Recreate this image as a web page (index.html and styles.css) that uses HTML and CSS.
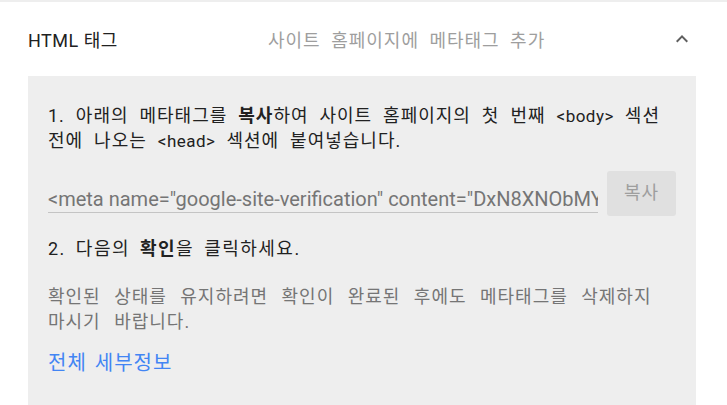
FILE: index.html
```html
<!DOCTYPE html>
<html lang="ko">
<head>
<meta charset="utf-8">
<link rel="stylesheet" href="styles.css">
</head>
<body>
<div class="card">
  <div class="header">
    <div class="title">HTML 태그</div>
    <div class="subtitle">사이트 홈페이지에 메타태그 추가</div>
    <svg class="chev" width="24" height="24" viewBox="0 0 24 24"><path d="M7.41 15.41L12 10.83l4.59 4.58L18 14l-6-6-6 6z" fill="#5f5f5f"/></svg>
  </div>
  <div class="panel">
    <p class="step step1">1. 아래의 메타태그를 <b>복사</b>하여 사이트 홈페이지의 첫 번째 <span class="code">&lt;body&gt;</span> 섹션 전에 나오는 <span class="code">&lt;head&gt;</span> 섹션에 붙여넣습니다.</p>
    <div class="copyrow">
      <div class="field"><span>&lt;meta name="google-site-verification" content="DxN8XNObMYq3kLw9Zp2sTfR7vH" /&gt;</span></div>
      <button class="copy">복사</button>
    </div>
    <p class="step step2">2. 다음의 <b>확인</b>을 클릭하세요.</p>
    <p class="note">확인된 상태를 유지하려면 확인이 완료된 후에도 메타태그를 삭제하지 마시기 바랍니다.</p>
    <a class="link" href="#">전체 세부정보</a>
  </div>
</div>
</body>
</html>
```
FILE: styles.css
```css
html, body {
  margin: 0;
  padding: 0;
  background: #fff;
}
body {
  font-family: Roboto, "Noto Sans CJK KR", sans-serif;
  color: #212121;
  width: 727px;
  height: 405px;
  overflow: hidden;
  border-top: 2px solid #eeeeee;
  box-sizing: border-box;
}
.card {
  padding: 0 31px 0 28px;
}
.header {
  display: flex;
  align-items: center;
  height: 74px;
}
.title {
  font-size: 18px;
  letter-spacing: 0.5px;
  color: #212121;
  width: 240px;
}
.subtitle {
  font-size: 18px;
  letter-spacing: 1px;
  word-spacing: 5px;
  color: #9e9e9e;
  flex: 1;
}
.chev {
  margin-right: 2px;
}
.panel {
  background: #eeeeee;
  padding: 27px 20px 0 20px;
  height: 329px;
  box-sizing: border-box;
}
.step {
  margin: 0;
  font-size: 18px;
  line-height: 25px;
  letter-spacing: 1px;
  word-spacing: 5.5px;
  color: #212121;
}
.step b {
  font-weight: 700;
}
.code {
  font-size: 17px;
  line-height: 1;
  letter-spacing: 0.5px;
}
.copyrow {
  display: flex;
  align-items: flex-start;
  margin-top: 18px;
}
.field {
  flex: 0 0 550px;
  margin-top: 16px;
  overflow: hidden;
  white-space: nowrap;
  font-size: 20px;
  line-height: 24px;
  color: #757575;
  border-bottom: 1px solid #c4c4c4;
  padding-bottom: 1px;
}
.copy {
  margin-left: 9px;
  width: 70px;
  height: 45px;
  border: none;
  border-radius: 3px;
  background: #e0e0e0;
  color: #9e9e9e;
  font-family: inherit;
  font-size: 18px;
  letter-spacing: 1px;
  padding: 0 0 6px;
}
.step2 {
  margin-top: 20px;
  letter-spacing: 1.5px;
  word-spacing: 4px;
}
.note {
  margin: 23px 0 0;
  font-size: 18px;
  line-height: 25px;
  letter-spacing: 1px;
  word-spacing: 8px;
  color: #757575;
}
.link {
  display: block;
  margin-top: 17px;
  font-size: 20px;
  line-height: 25px;
  letter-spacing: 1px;
  word-spacing: 2px;
  color: #4285f4;
  text-decoration: none;
}
```
